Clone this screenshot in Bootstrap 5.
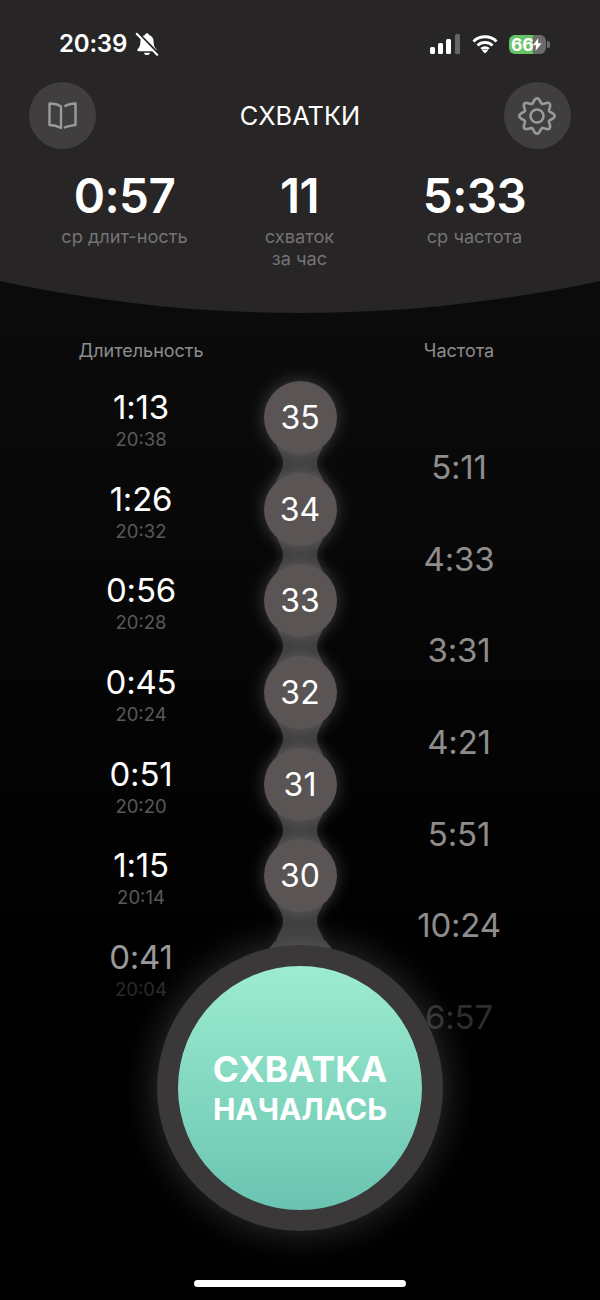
<!DOCTYPE html>
<html lang="ru">

<head>
    <meta charset="UTF-8">
    <title>Схватки</title>
    <link href="https://cdn.jsdelivr.net/npm/bootstrap@5.3.0/dist/css/bootstrap.min.css" rel="stylesheet">
    <style>
        html, body { height: 1300px; overflow: hidden; }
        body { background: linear-gradient(#0c0b0c 320px, #000 1000px); font-family: Inter, "Noto Sans", sans-serif; color: #fff; }
        .screen { width: 600px; height: 1300px; }

        /* шапка с дугой снизу */
        .top-panel { height: 313px; background: #272526; clip-path: circle(1422px at 50% -1109px); }
        .status-row { height: 80px; padding: 26px 50px 0 59px; }
        .clock { font-size: 24px; font-weight: 600; line-height: 36px; letter-spacing: -.2px; }
        .batt { width: 37px; height: 19px; border-radius: 6px; background: linear-gradient(90deg, #66c466 66%, #6b6b6b 66%); font-size: 17.5px; font-weight: 700; line-height: 19px; padding-left: 2px; letter-spacing: -.2px; }
        .batt-nub { width: 3px; height: 7px; border-radius: 0 2px 2px 0; background: #6b6b6b; margin-left: 1px; }
        .head-row { height: 67px; margin-top: 2px; padding: 0 29px; }
        .round-btn { width: 67px; height: 67px; background: #403e3f; }
        .page-title { font-size: 25.4px; font-weight: 400; line-height: 1; }
        .stat-row { margin-top: 18px; padding-right: 1px; }
        .stat-box { width: 175px; }
        .stat-num { font-size: 47.5px; font-weight: 600; line-height: 58px; letter-spacing: -.5px; }
        .stat-cap { font-size: 18.2px; line-height: 21.5px; color: #757374; margin-top: 1px; }

        /* колонки */
        .col-titles { margin-top: 27px; height: 31px; font-size: 18px; line-height: 22px; color: #8e8c8d; }
        .side-col { width: 200px; margin-left: 41px; }
        .side-col.right-side { margin-left: 118px; }
        .lists { height: 660px; }
        .rows-left { width: 200px; margin-left: 41px; }
        .chain { width: 118px; }
        .rows-right { width: 200px; padding-top: 76px; }
        .time-row { height: 91.67px; text-align: center; }
        .time-main { font-size: 33px; line-height: 36px; padding-top: 18px; box-sizing: content-box; letter-spacing: -.2px; }
        .time-sub { font-size: 18.5px; line-height: 24px; margin-top: 2px; }
        .freq { font-size: 33px; line-height: 40px; letter-spacing: -.2px; }
        .chain-node { height: 91.67px; padding-top: 10px; }
        .node-disc { width: 73px; height: 73px; background: #5a5454; font-size: 32px; padding-top: 1px; box-shadow: 0 0 18px rgba(255, 255, 255, .22); z-index: 1; }
        .node-neck { position: absolute; left: 19px; top: 46px; z-index: 0; filter: drop-shadow(0 0 6px rgba(255, 255, 255, .12)); }

        /* большая кнопка */
        .start-ring { position: absolute; left: 157px; top: 945px; width: 286px; height: 286px; background: #3a3839; box-shadow: 0 0 38px rgba(255, 255, 255, .2); z-index: 3; }
        .start-btn { width: 244px; height: 244px; background: linear-gradient(#9cecd0, #6bc4b1); border: 0; color: #fff; font-weight: 700; line-height: 1; }
        .start-a { font-size: 35.5px; }
        .start-b { font-size: 30px; margin-top: 7px; }
        .home-bar { position: absolute; left: 194px; top: 1280px; width: 212px; height: 7px; background: #fff; z-index: 4; }
    </style>
</head>

<body>
    <div class="screen position-relative">
        <div class="top-panel">
            <div class="status-row d-flex align-items-start justify-content-between">
                <div class="d-flex align-items-center gap-2">
                    <span class="clock">20:39</span>
                    <svg width="24" height="24" viewBox="1 1 20 20">
                        <path d="M11 2c-1 0-1.600.7-1.700 1.500C6.800 4.200 5.500 6.300 5.500 9c0 3.500-.8 5-2.300 6.300-.6.600-.3 1.700.7 1.700h14.200c1 0 1.300-1.100.7-1.700C17.300 14 16.500 12.500 16.500 9c0-2.700-1.300-4.800-3.800-5.500C12.600 2.700 12 2 11 2zM8.500 18.200c.2 1.200 1.200 2 2.500 2s2.300-.8 2.500-2z" fill="#fff" />
                        <path d="M2.800 1.200 21 19.500" stroke="#272526" stroke-width="2" />
                        <path d="M2 2 20 20.500" stroke="#fff" stroke-width="1.700" />
                    </svg>
                </div>
                <div class="d-flex align-items-center" style="gap: 11px; height: 36px;">
                    <svg width="31" height="20" viewBox="0 0 31 20">
                        <rect x="0" y="13" width="5" height="7" rx="1.500" fill="#fff" />
                        <rect x="8" y="9" width="5" height="11" rx="1.500" fill="#fff" />
                        <rect x="16" y="5" width="5" height="15" rx="1.500" fill="#fff" />
                        <rect x="25" y="0" width="5" height="20" rx="1.500" fill="#666" />
                    </svg>
                    <svg width="26" height="20" viewBox="0 0 26 20">
                        <path d="M1.500 7.500C7.800 1.300 18.200 1.300 24.500 7.500M5.500 11.500c4-3.900 11-3.900 15 0M9.300 15c2-1.800 5.400-1.800 7.400 0" fill="none" stroke="#fff" stroke-width="3" />
                        <path d="M10 16.500 13 19.500 16 16.500c-1.700-1.500-4.300-1.500-6 0z" fill="#fff" />
                    </svg>
                    <div class="d-flex align-items-center">
                        <div class="batt d-flex align-items-center justify-content-between">
                            <span>66</span>
                            <svg width="10" height="15" viewBox="0 0 10 15" class="me-1">
                                <path d="M6 0 0 8.500h3.500L3 15 10 6H6z" fill="#fff" />
                            </svg>
                        </div>
                        <div class="batt-nub"></div>
                    </div>
                </div>
            </div>
            <div class="head-row d-flex align-items-center justify-content-between">
                <div class="round-btn rounded-circle d-flex align-items-center justify-content-center">
                    <svg width="33" height="29" viewBox="0 0 33 29">
                        <path d="M15 5.500C12 3.500 8 2.500 3.500 2.500V24c4.500 0 8 1 11.500 3zM18.500 5.500c3-2 7-3 11-3V24c-3.500.3-6.300 1-8.500 1.700-1.300.4-2.300.8-3 1.300" fill="none" stroke="#9b9a9a" stroke-width="2.400" stroke-linejoin="round" />
                    </svg>
                </div>
                <div class="page-title">СХВАТКИ</div>
                <div class="round-btn rounded-circle d-flex align-items-center justify-content-center">
                    <svg width="40" height="40" viewBox="0 0 40 40">
                        <path id="gearPath" fill="none" stroke="#9b9a9a" stroke-width="2.600" stroke-linejoin="round" />
                        <circle cx="20" cy="20" r="6.500" fill="none" stroke="#9b9a9a" stroke-width="2.600" />
                    </svg>
                </div>
            </div>
            <div class="stat-row d-flex justify-content-center text-center">
                <div class="stat-box">
                    <div class="stat-num">0:57</div>
                    <div class="stat-cap">ср длит-ность</div>
                </div>
                <div class="stat-box">
                    <div class="stat-num">11</div>
                    <div class="stat-cap">схваток<br>за час</div>
                </div>
                <div class="stat-box">
                    <div class="stat-num">5:33</div>
                    <div class="stat-cap">ср частота</div>
                </div>
            </div>
        </div>

        <div class="col-titles d-flex text-center">
            <div class="side-col">Длительность</div>
            <div class="side-col right-side">Частота</div>
        </div>

        <div class="lists d-flex">
            <div class="rows-left" id="rowsLeft"></div>
            <div class="chain" id="chain"></div>
            <div class="rows-right" id="rowsRight"></div>
        </div>

        <div class="start-ring rounded-circle d-flex align-items-center justify-content-center">
            <button class="start-btn rounded-circle d-flex flex-column align-items-center justify-content-center">
                <span class="start-a">СХВАТКА</span>
                <span class="start-b">НАЧАЛАСЬ</span>
            </button>
        </div>
        <div class="home-bar rounded-pill"></div>
    </div>

    <script src="https://cdn.jsdelivr.net/npm/bootstrap@5.3.0/dist/js/bootstrap.bundle.min.js"></script>
    <script>
        const rows = [
            { n: 35, dur: '1:13', at: '20:38', freq: '5:11' },
            { n: 34, dur: '1:26', at: '20:32', freq: '4:33' },
            { n: 33, dur: '0:56', at: '20:28', freq: '3:31' },
            { n: 32, dur: '0:45', at: '20:24', freq: '4:21' },
            { n: 31, dur: '0:51', at: '20:20', freq: '5:51' },
            { n: 30, dur: '1:15', at: '20:14', freq: '10:24' },
            { n: 29, dur: '0:41', at: '20:04', freq: '6:57' }
        ];

        // Нижние строки затухают к кнопке
        const mainColor = i => i < 6 ? '#fff' : '#9a9899';
        const subColor = i => i < 6 ? '#5a5859' : '#2c2a2b';
        const freqColor = i => i < 6 ? '#8f8c8c' : '#2e2c2d';

        document.getElementById('rowsLeft').innerHTML = rows.map((r, i) => `
            <div class="time-row">
                <div class="time-main" style="color: ${mainColor(i)}">${r.dur}</div>
                <div class="time-sub" style="color: ${subColor(i)}">${r.at}</div>
            </div>`).join('');

        document.getElementById('rowsRight').innerHTML = rows.map((r, i) => `
            <div class="time-row freq" style="color: ${freqColor(i)}">${r.freq}</div>`).join('');

        document.getElementById('chain').innerHTML = rows.map((r, i) => `
            <div class="chain-node position-relative d-flex justify-content-center">
                ${i < 6 ? `<svg class="node-neck" width="80" height="92" viewBox="0 0 80 92"><path d="M16 0V26C18 34 23 38 23 46S18 58 16 66V92H64V66C62 58 57 54 57 46S62 34 64 26V0Z" fill="#3c3a3a"/></svg>` : ''}
                <div class="node-disc rounded-circle d-flex align-items-center justify-content-center position-relative" style="${i === 6 ? 'background:#3a3839;box-shadow:none' : ''}">${i < 6 ? r.n : ''}</div>
            </div>`).join('');

        // Контур шестерёнки: 8 зубцов
        let d = '';
        for (let a = 0; a <= 360; a += 4) {
            const t = a * Math.PI / 180;
            const rad = 15.4 + 2.3 * Math.cos(8 * t);
            d += (a ? 'L' : 'M') + (20 + rad * Math.sin(t)).toFixed(2) + ' ' + (20 - rad * Math.cos(t)).toFixed(2);
        }
        document.getElementById('gearPath').setAttribute('d', d + 'Z');
    </script>
</body>

</html>
